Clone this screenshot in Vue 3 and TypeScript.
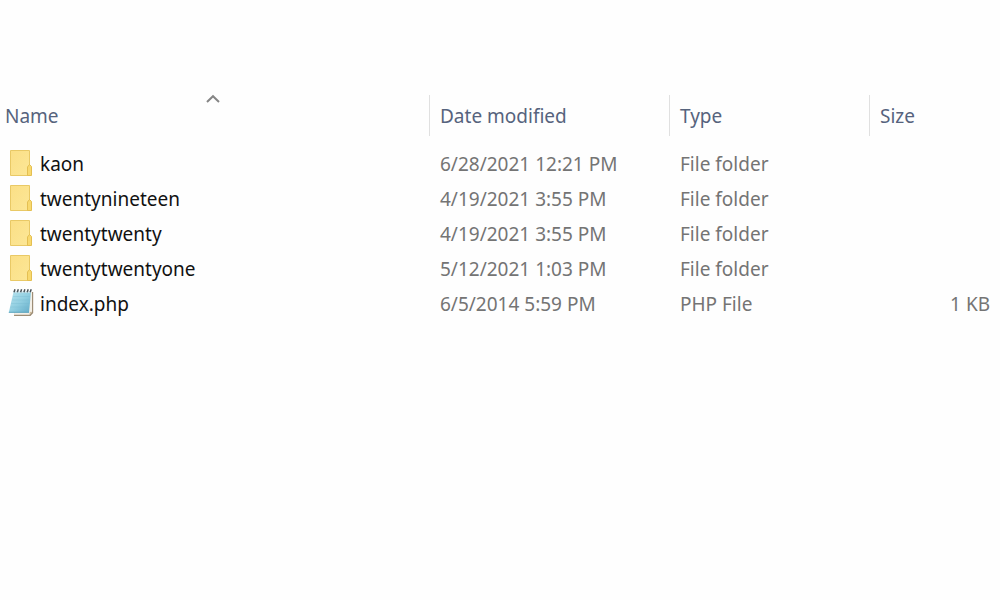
<script setup lang="ts">
import { computed, ref } from 'vue'

type Key = 'name' | 'modified' | 'type' | 'size'

interface Entry {
  name: string
  modified: string
  type: string
  size: string
  folder: boolean
}

const columns: { key: Key; label: string }[] = [
  { key: 'name', label: 'Name' },
  { key: 'modified', label: 'Date modified' },
  { key: 'type', label: 'Type' },
  { key: 'size', label: 'Size' },
]

const entries: Entry[] = [
  { name: 'kaon', modified: '6/28/2021 12:21 PM', type: 'File folder', size: '', folder: true },
  { name: 'twentynineteen', modified: '4/19/2021 3:55 PM', type: 'File folder', size: '', folder: true },
  { name: 'twentytwenty', modified: '4/19/2021 3:55 PM', type: 'File folder', size: '', folder: true },
  { name: 'twentytwentyone', modified: '5/12/2021 1:03 PM', type: 'File folder', size: '', folder: true },
  { name: 'index.php', modified: '6/5/2014 5:59 PM', type: 'PHP File', size: '1 KB', folder: false },
]

const sortKey = ref<Key>('name')
const ascending = ref(true)

function sortBy(key: Key) {
  ascending.value = sortKey.value === key ? !ascending.value : true
  sortKey.value = key
}

function sortValue(entry: Entry): string | number {
  if (sortKey.value === 'modified') return new Date(entry.modified).getTime()
  return entry[sortKey.value]
}

// Folders stay grouped ahead of files while sorting ascending.
const rows = computed(() =>
  [...entries].sort((a, b) => {
    const group = Number(b.folder) - Number(a.folder)
    const x = sortValue(a)
    const y = sortValue(b)
    const order = group || (x < y ? -1 : x > y ? 1 : 0)
    return ascending.value ? order : -order
  }),
)
</script>

<template>
  <main class="pane">
    <table class="files">
      <colgroup>
        <col class="col-name" />
        <col class="col-modified" />
        <col class="col-type" />
        <col class="col-size" />
      </colgroup>
      <thead>
        <tr>
          <th
            v-for="column in columns"
            :key="column.key"
            scope="col"
            :aria-sort="sortKey === column.key ? (ascending ? 'ascending' : 'descending') : 'none'"
          >
            <button type="button" class="heading" @click="sortBy(column.key)">
              <svg
                v-if="sortKey === column.key"
                class="caret"
                :class="{ flipped: !ascending }"
                width="16"
                height="10"
                viewBox="0 0 16 10"
                aria-hidden="true"
              >
                <path d="M2 8 L8 2.2 L14 8" fill="none" stroke="#858585" stroke-width="2" />
              </svg>
              {{ column.label }}
            </button>
          </th>
        </tr>
      </thead>
      <tbody>
        <tr v-for="row in rows" :key="row.name">
          <td class="name">
            <div class="entry">
              <svg v-if="row.folder" class="icon" width="26" height="30" viewBox="0 0 26 30" aria-hidden="true">
                <defs>
                  <linearGradient id="folder-face" x1="0" y1="0" x2="1" y2="1">
                    <stop offset="0" stop-color="#fbdf86" />
                    <stop offset="1" stop-color="#fce797" />
                  </linearGradient>
                </defs>
                <path d="M2.5 3.5 H21.5 V28.5 H2.5 Z" fill="url(#folder-face)" stroke="#e9c966" />
                <path d="M19.5 28.5 V20 L21.5 17.5 L23.5 19.5 V28.5 Z" fill="#f8d96f" stroke="#e4bf52" />
              </svg>
              <svg v-else class="icon" width="26" height="30" viewBox="0 0 26 30" aria-hidden="true">
                <defs>
                  <linearGradient id="note-sheet" x1="0" y1="0" x2="1" y2="1">
                    <stop offset="0" stop-color="#b9e3ee" />
                    <stop offset="0.5" stop-color="#92cfe1" />
                    <stop offset="1" stop-color="#62abc8" />
                  </linearGradient>
                </defs>
                <path d="M8 5 H25.2 V26 L22.5 29 H6 Z" fill="#9d8d76" />
                <path d="M8 5 H24 V24.8 L21.5 27.8 H6 Z" fill="#f4f0e8" />
                <path d="M21.5 27.8 L21.8 25 L24 24.8 Z" fill="#cdb995" />
                <path d="M5.5 5 H23 L21 25.5 H0.8 Z" fill="url(#note-sheet)" />
                <path
                  d="M5 9.5 H22 M4.2 13 H21.8 M3.3 16.5 H21.4 M2.4 20 H21"
                  stroke="#74b9cf"
                  stroke-width="0.5"
                  opacity="0.6"
                />
                <path d="M0.8 25.3 H21" stroke="#5fa5be" />
                <path d="M5.5 5 H23" stroke="#cfe9f1" stroke-width="1.4" />
                <path
                  d="M6 5.2 L7 2.2 M9.3 5.2 L10.3 2.2 M12.6 5.2 L13.6 2.2 M15.9 5.2 L16.9 2.2 M19.2 5.2 L20.2 2.2 M22.2 5.2 L23.2 2.2"
                  stroke="#4a5459"
                  stroke-width="1.5"
                />
              </svg>
              <span>{{ row.name }}</span>
            </div>
          </td>
          <td>{{ row.modified }}</td>
          <td>{{ row.type }}</td>
          <td class="size">{{ row.size }}</td>
        </tr>
      </tbody>
    </table>
  </main>
</template>

<style>
body {
  margin: 0;
  background: #fefefe;
}
</style>

<style scoped>
.pane {
  padding-top: 95px;
  font-family: 'Segoe UI', 'Noto Sans', 'Open Sans', sans-serif;
  font-size: 19px;
  line-height: 35px;
  color: #747474;
}

.files {
  width: 100%;
  table-layout: fixed;
  border-collapse: separate;
  border-spacing: 0;
}

.col-name {
  width: 43%;
}

.col-modified {
  width: 24%;
}

.col-type {
  width: 20%;
}

.col-size {
  width: 13%;
}

th {
  padding: 0;
  border-right: 1px solid #e0e0e0;
}

th:last-child {
  border-right: 0;
}

.heading {
  position: relative;
  display: block;
  width: 100%;
  height: 41px;
  padding: 2px 10px 0;
  border: 0;
  background: transparent;
  font: inherit;
  font-weight: 400;
  text-align: left;
  color: #56637d;
}

th:first-child .heading {
  padding-left: 5px;
}

.caret {
  position: absolute;
  top: -1px;
  left: calc(50% - 10px);
}

.flipped {
  transform: scaleY(-1);
}

tbody::before {
  content: '';
  display: block;
  height: 11px;
}

td {
  height: 35px;
  padding: 0 10px;
  white-space: nowrap;
}

td.name {
  padding: 0 8px;
  color: #111;
}

.entry {
  display: flex;
  align-items: flex-start;
  gap: 6px;
}

.icon {
  flex: none;
}

.size {
  text-align: right;
}
</style>
